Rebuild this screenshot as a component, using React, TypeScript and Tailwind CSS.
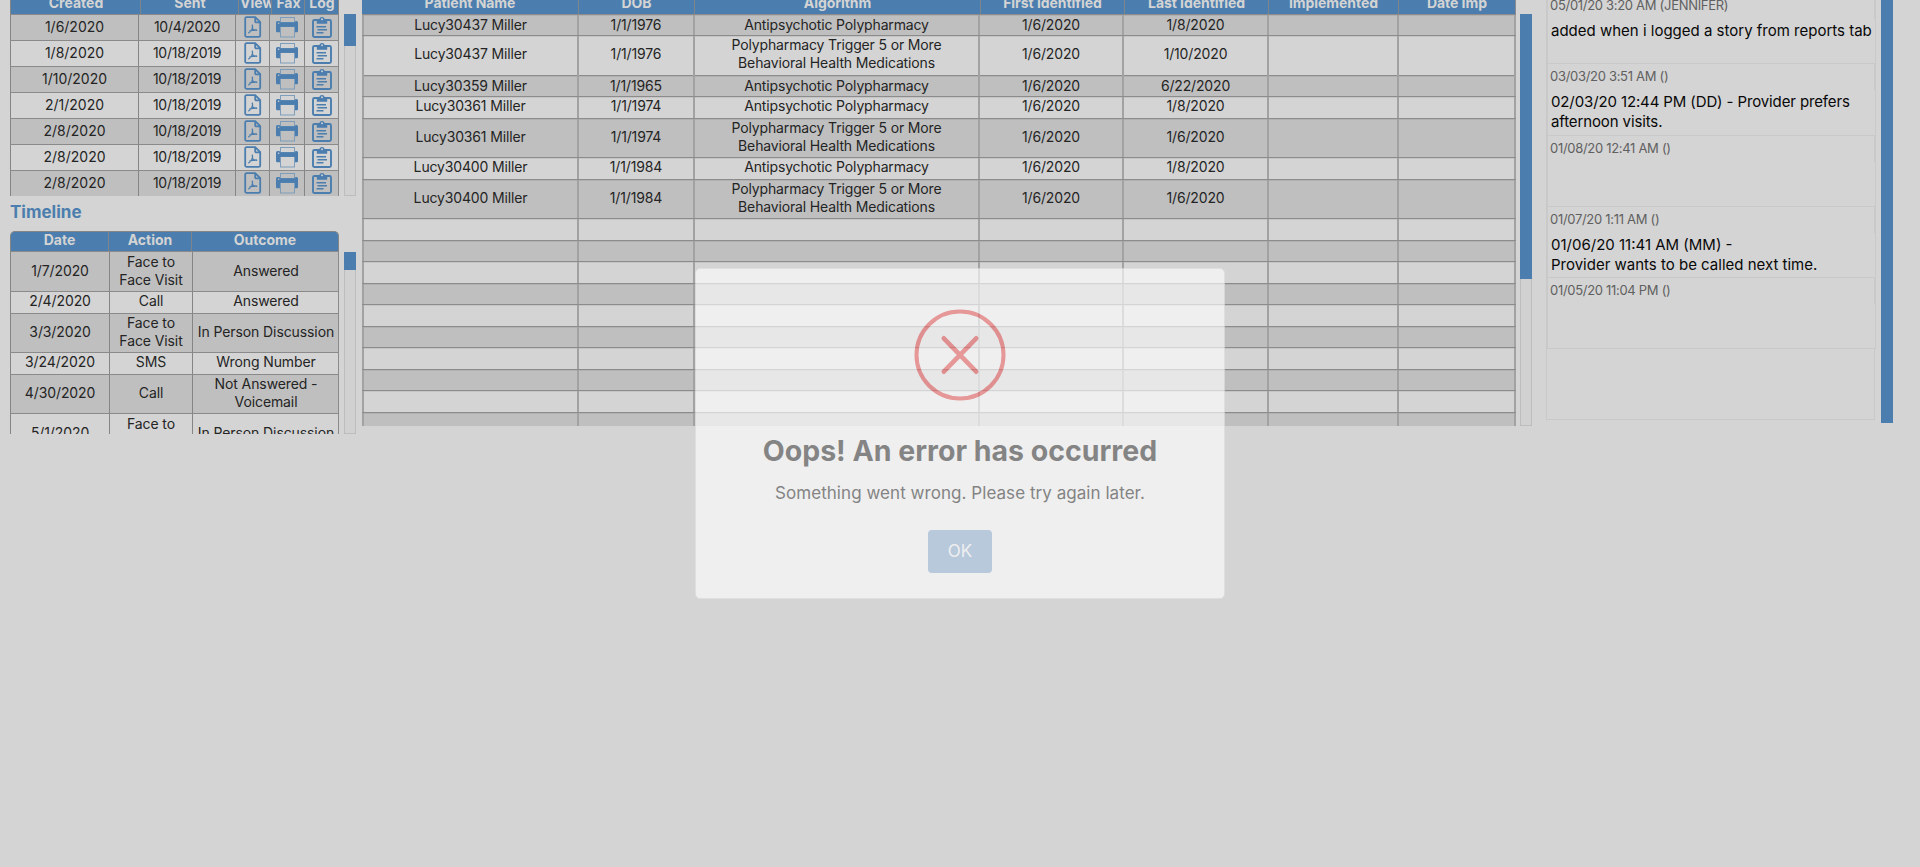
import type { ReactNode } from "react";

const reports = [
  ["1/6/2020", "10/4/2020"],
  ["1/8/2020", "10/18/2019"],
  ["1/10/2020", "10/18/2019"],
  ["2/1/2020", "10/18/2019"],
  ["2/8/2020", "10/18/2019"],
  ["2/8/2020", "10/18/2019"],
  ["2/8/2020", "10/18/2019"],
];

const FACE = "Face to\nFace Visit";
const timeline = [
  { h: "h-[40px]", pad: "pb-px", cells: ["1/7/2020", FACE, "Answered"] },
  { h: "h-[22px]", pad: "pb-[3px]", cells: ["2/4/2020", "Call", "Answered"] },
  { h: "h-[39px]", pad: "pb-[2px]", cells: ["3/3/2020", FACE, "In Person Discussion"] },
  { h: "h-[22px]", pad: "pb-[3px]", cells: ["3/24/2020", "SMS", "Wrong Number"] },
  { h: "h-[39px]", pad: "pb-[2px]", cells: ["4/30/2020", "Call", "Not Answered -\nVoicemail"] },
  { h: "h-[39px]", pad: "pb-px", cells: ["5/1/2020", FACE, "In Person Discussion"] },
];

const ANTI = "Antipsychotic Polypharmacy";
const POLY = "Polypharmacy Trigger 5 or More\nBehavioral Health Medications";
const patients = [
  { h: "h-[21px]", pad: "pb-px", cells: ["Lucy30437 Miller", "1/1/1976", ANTI, "1/6/2020", "1/8/2020"] },
  { h: "h-[40px]", pad: "pb-[4px]", cells: ["Lucy30437 Miller", "1/1/1976", POLY, "1/6/2020", "1/10/2020"] },
  { h: "h-[21px]", pad: "pb-px", cells: ["Lucy30359 Miller", "1/1/1965", ANTI, "1/6/2020", "6/22/2020"] },
  { h: "h-[22px]", pad: "pb-[3px]", cells: ["Lucy30361 Miller", "1/1/1974", ANTI, "1/6/2020", "1/8/2020"] },
  { h: "h-[39px]", pad: "pb-[2px]", cells: ["Lucy30361 Miller", "1/1/1974", POLY, "1/6/2020", "1/6/2020"] },
  { h: "h-[22px]", pad: "pb-[3px]", cells: ["Lucy30400 Miller", "1/1/1984", ANTI, "1/6/2020", "1/8/2020"] },
  { h: "h-[39px]", pad: "pb-[2px]", cells: ["Lucy30400 Miller", "1/1/1984", POLY, "1/6/2020", "1/6/2020"] },
  ...Array.from({ length: 10 }, (_, i) => ({ h: i % 2 ? "h-[21px]" : "h-[22px]", pad: "", cells: [] as string[] })),
];

const notes = [
  { h: "h-[71px]", track: "", stamp: "05/01/20 3:20 AM (JENNIFER)", text: "added when i logged a story from reports tab" },
  { h: "h-[72px]", track: "tracking-[-0.12px]", stamp: "03/03/20 3:51 AM ()", text: "02/03/20 12:44 PM (DD) - Provider prefers\nafternoon visits." },
  { h: "h-[71px]", track: "", stamp: "01/08/20 12:41 AM ()", text: "" },
  { h: "h-[71px]", track: "", stamp: "01/07/20 1:11 AM ()", text: "01/06/20 11:41 AM (MM) -\nProvider wants to be called next time." },
  { h: "h-[71px]", track: "", stamp: "01/05/20 11:04 PM ()", text: "" },
];

function PdfIcon() {
  return (
    <svg width="18" height="22" viewBox="0 0 18 22" fill="none" stroke="#4b7eae" strokeWidth="1.8">
      <path d="M2.400 1.200h8.800l5 5v13a1.600 1.600 0 0 1-1.600 1.600H2.400A1.200 1.200 0 0 1 1.200 19.600V2.400A1.200 1.200 0 0 1 2.400 1.200z" />
      <path d="M11.200 1.400v4a1 1 0 0 0 1 1h4" />
      <path d="M8 8.600c.900 1.600.700 3-.100 4.700-.8 1.600-1.900 3.200-3.600 3.800M8.300 12.200c.9 1.600 2 2.400 4.900 2.200M5.200 15.400c2-1.100 4.200-1.500 7.600-1.400" strokeWidth="1.300" />
    </svg>
  );
}

function PrinterIcon({ paper }: { paper: string }) {
  return (
    <svg width="22" height="22" viewBox="0 0 22 22">
      <rect x="4.500" y="1.500" width="14" height="5" fill={paper} stroke="#7d9dbb" strokeWidth="1" />
      <path d="M1.500 5h2.300v1.200h15.400V5h1.300A1.500 1.500 0 0 1 22 6.500v8.500a1.200 1.200 0 0 1-1.200 1.200H1.200A1.200 1.200 0 0 1 0 15V6.500A1.500 1.500 0 0 1 1.500 5z" fill="#4b7eae" />
      <rect x="4.500" y="10.500" width="14" height="10.500" fill={paper} stroke="#7d9dbb" strokeWidth="1" />
      <path d="M4 10.200h15" stroke="#4b7eae" strokeWidth="1.400" />
      <circle cx="2.600" cy="7.200" r="0.800" fill={paper} />
    </svg>
  );
}

function ClipboardIcon() {
  return (
    <svg width="20" height="22" viewBox="0 0 20 22" fill="none" stroke="#4b7eae">
      <rect x="1" y="4" width="18" height="17" rx="1.500" strokeWidth="1.900" />
      <path d="M4.800 3.200h2.400a2.900 2.900 0 0 1 5.600 0h2.400v4.500H4.800z" fill="#4b7eae" stroke="none" />
      <circle cx="10" cy="3.200" r="1" fill="#c9cdd2" stroke="none" />
      <path d="M4.500 10.700h9.500M5.500 13.700h9.500M4.500 16.800h7" strokeWidth="1.500" />
    </svg>
  );
}

function Heads({ labels, cols, size = "" }: { labels: string[]; cols: string; size?: string }) {
  return (
    <div className={`grid font-bold text-[#d4d4d4] ${cols} ${size}`}>
      {labels.map((l, i) => (
        <div
          key={l}
          className={`flex items-center overflow-hidden whitespace-nowrap ${l === "View" ? "justify-start" : "justify-center"} ${i ? "border-l border-[#7f8488]" : ""}`}
        >
          {l}
        </div>
      ))}
    </div>
  );
}

function Scroll({ className, thumb }: { className: string; thumb: string }) {
  return (
    <div className={`w-[12px] shrink-0 border border-t-0 border-[#bdbdbd] bg-[#d1d1d1] ${className}`}>
      <div className={`-mx-px bg-[#4b7eae] ${thumb}`} />
    </div>
  );
}

function Cell({ children, className = "" }: { children?: ReactNode; className?: string }) {
  return <div className={`flex items-center justify-center whitespace-pre text-center ${className}`}>{children}</div>;
}

function LeftColumn() {
  return (
    <section className="ml-[10px] w-[346px] shrink-0">
      <div className="flex h-[196px] items-start justify-between">
        <div className="h-[196px] w-[329px] overflow-hidden">
          <div className="h-[14px] border-x border-[#858585] bg-[#4b7eae]">
            <Heads
              labels={["Created", "Sent", "View", "Fax", "Log"]}
              cols="grid-cols-[129px_98px_33px_33px_34px]"
              size="h-[14px] [&>div]:-mt-[10px] [&>div]:h-[24px] [&>div]:pl-px"
            />
          </div>
          {reports.map(([created, sent], i) => (
            <div
              key={i}
              className={`grid h-[26px] grid-cols-[128px_97px_34px_35px_35px] border-r border-t border-[#8a8a8a] ${i % 2 ? "bg-[#d4d4d4]" : "bg-[#bfbfbf]"} [&>div]:border-l [&>div]:border-[#858585]`}
            >
              <Cell className="pb-[3px]">{created}</Cell>
              <Cell className="pb-[3px] tracking-[-0.25px]">{sent}</Cell>
              <Cell className="pb-px"><PdfIcon /></Cell>
              <Cell className="pb-px"><PrinterIcon paper={i % 2 ? "#d4d4d4" : "#bfbfbf"} /></Cell>
              <Cell className="pb-px"><ClipboardIcon /></Cell>
            </div>
          ))}
        </div>
        <Scroll className="mt-[14px] h-[182px]" thumb="h-[32px]" />
      </div>
      <h2 className="h-[35px] pt-[4px] text-[17px] font-bold leading-[24px] text-[#4b7eae]">Timeline</h2>
      <div className="flex h-[203px] items-start justify-between">
        <div className="h-[203px] w-[329px] overflow-hidden">
          <div className="h-[20px] overflow-hidden rounded-t-[5px] border border-b-0 border-[#858585] bg-[#4b7eae]">
            <Heads labels={["Date", "Action", "Outcome"]} cols="grid-cols-[97px_83px_147px]" size="h-[19px] [&>div]:pb-[5px]" />
          </div>
          {timeline.map((row, i) => (
            <div key={i} className={`grid grid-cols-[99px_83px_147px] border-r border-t border-[#8a8a8a] leading-[18px] ${row.h} ${i % 2 ? "bg-[#d4d4d4]" : "bg-[#bfbfbf]"}`}>
              {row.cells.map((c, j) => (
                <Cell key={j} className={`border-l border-[#858585] tracking-[-0.1px] ${row.pad}`}>{c}</Cell>
              ))}
            </div>
          ))}
        </div>
        <Scroll className="mt-[21px] h-[182px]" thumb="h-[18px]" />
      </div>
    </section>
  );
}

function PatientTable() {
  return (
    <section className="ml-[6px] flex h-[426px] w-[1170px] shrink-0 items-start justify-between">
      <div className="h-[426px] w-[1154px] overflow-hidden">
        <div className="h-[14px] border-r border-[#8b8b8b] bg-[#4b7eae]">
          <Heads
            labels={["Patient Name", "DOB", "Algorithm", "First Identified", "Last Identified", "Implemented", "Date Imp"]}
            cols="grid-cols-[216px_116px_286px_144px_144px_130px_117px]"
            size="h-[14px] tracking-[-0.05px] [&>div]:-mt-[10px] [&>div]:h-[24px]"
          />
        </div>
        {patients.map((row, i) => (
          <div
            key={i}
            className={`grid grid-cols-[215px_116px_285px_144px_145px_130px_119px] border-t border-[#8c8c8c] leading-[18px] shadow-[inset_0_1px_0_rgba(0,0,0,0.07)] ${row.h} ${i % 2 ? "bg-[#d4d4d4]" : "bg-[#bfbfbf]"}`}
          >
            {Array.from({ length: 7 }, (_, j) => (
              <Cell key={j} className={`border-l-2 border-[#a2a2a2] tracking-[-0.15px] last:border-r-2 ${row.pad}`}>{row.cells[j]}</Cell>
            ))}
          </div>
        ))}
      </div>
      <Scroll className="mt-[14px] h-[412px]" thumb="h-[265px]" />
    </section>
  );
}

function Notes() {
  return (
    <section className="ml-[14px] flex h-[423px] w-[347px] shrink-0 justify-between">
      <div className="h-[420px] w-[330px] overflow-hidden">
        <div className="-mt-[8px]">
          {notes.map((n) => (
            <article key={n.stamp} className={`border-l-2 border-r border-t border-[#c9c9c9] ${n.h}`}>
              <div className="h-[26px] border-r border-[#c9c9c9] pl-[2px] pt-[2px] text-[13px] leading-[20px] tracking-[-0.3px] text-[#606060]">{n.stamp}</div>
              <p className={`whitespace-pre pl-[3px] pt-[2px] text-[15px] leading-[20px] text-[#080808] ${n.track}`}>{n.text}</p>
            </article>
          ))}
        </div>
        <div className="h-[72px] border-t border-[#c9c9c9]">
          <div className="-mt-px h-[72px] w-[329px] border-x border-b border-[#c9c9c9]" />
        </div>
      </div>
      <div className="w-[12px] bg-[#4b7eae]" />
    </section>
  );
}

function ErrorDialog() {
  return (
    <div className="absolute inset-0 flex items-center justify-center">
      <div role="alertdialog" className="flex h-[331px] w-[530px] flex-col items-center rounded-[5px] border border-[#e4e4e4] bg-white opacity-[0.63]">
        <svg className="mt-[40px] shrink-0" width="92" height="92" viewBox="0 0 92 92" fill="none" stroke="#f27474" strokeWidth="4">
          <circle cx="46" cy="46" r="43.500" />
          <path d="M29.800 29.300L62.200 62.700M62.200 29.300L29.800 62.700" strokeWidth="4.600" strokeLinecap="round" />
        </svg>
        <h1 className="mt-[30px] whitespace-nowrap text-[28.5px] font-bold leading-[40px] text-[#575757]">Oops! An error has occurred</h1>
        <p className="mt-[10px] whitespace-nowrap text-[17px] leading-[24px] tracking-[0.05px] text-[#545454]">Something went wrong. Please try again later.</p>
        <button className="mt-[25px] h-[43px] w-[64px] rounded-[4px] bg-[#a8c3e1] text-[17px] text-white">OK</button>
      </div>
    </div>
  );
}

export default function App() {
  return (
    <div className="relative h-[867px] w-full overflow-hidden bg-[#d4d4d4] font-['Inter','Liberation_Sans',sans-serif] text-[14px] text-[#242424]">
      <main className="flex items-start">
        <LeftColumn />
        <PatientTable />
        <Notes />
      </main>
      <ErrorDialog />
    </div>
  );
}
